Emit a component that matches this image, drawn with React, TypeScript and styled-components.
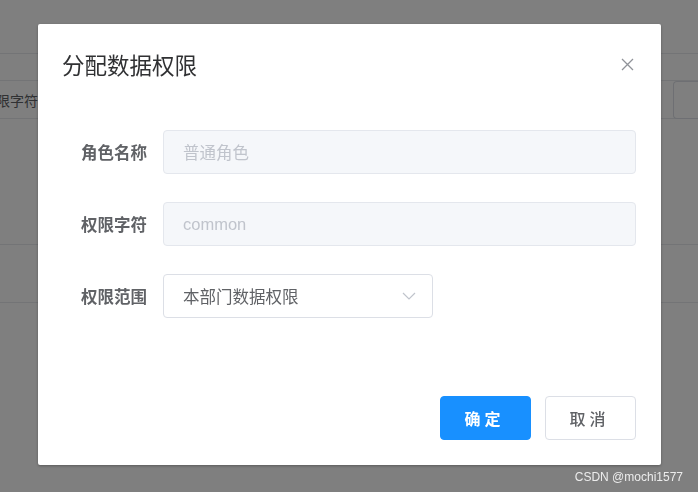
import React from 'react';
import styled, { createGlobalStyle } from 'styled-components';

const GlobalStyle = createGlobalStyle`
  html, body {
    margin: 0;
    padding: 0;
    width: 698px;
    height: 492px;
    overflow: hidden;
    background: #ffffff;
    font-family: "Noto Sans CJK SC", "Liberation Sans", sans-serif;
  }
`;

const Page = styled.div`
  width: 698px;
  height: 492px;
  display: flex;
  flex-direction: column;
  background: #ffffff;
`;

const PageLine = styled.div<{ $h: number }>`
  height: ${(p) => p.$h}px;
  border-bottom: 1px solid #e6e8ec;
  box-sizing: border-box;
  display: flex;
  align-items: center;
  justify-content: space-between;
`;

const GhostText = styled.span`
  font-size: 14px;
  color: #606266;
  margin-left: -18px;
`;

const GhostBox = styled.span`
  width: 26px;
  height: 36px;
  border: 1px solid #dcdfe6;
  border-right: none;
  border-radius: 4px 0 0 4px;
  margin-right: -2px;
`;

const Mask = styled.div`
  position: fixed;
  inset: 0;
  background: rgba(0, 0, 0, 0.5);
`;

const Dialog = styled.div`
  position: fixed;
  left: 38px;
  top: 24px;
  width: 623px;
  height: 441px;
  background: #ffffff;
  border-radius: 2px;
  box-shadow: 0 1px 3px rgba(0, 0, 0, 0.3);
  display: flex;
  flex-direction: column;
  box-sizing: border-box;
`;

const Header = styled.div`
  display: flex;
  align-items: center;
  justify-content: space-between;
  padding: 24px 26px 0 24px;
  height: 56px;
  box-sizing: border-box;
`;

const Title = styled.h2`
  margin: 0;
  font-size: 22.5px;
  font-weight: 400;
  color: #303133;
  line-height: 30px;
`;

const CloseButton = styled.button`
  border: none;
  background: none;
  padding: 0;
  width: 16px;
  height: 16px;
  display: flex;
  align-items: center;
  justify-content: center;
  cursor: pointer;
`;

const Body = styled.div`
  padding: 50px 25px 0 24px;
  display: flex;
  flex-direction: column;
  gap: 28px;
  flex: 1;
`;

const Row = styled.div`
  display: flex;
  align-items: center;
`;

const Label = styled.label`
  flex: 0 0 101px;
  padding-right: 16px;
  box-sizing: border-box;
  text-align: right;
  font-size: 16.5px;
  font-weight: 700;
  color: #606266;
`;

const Field = styled.div<{ $disabled?: boolean; $width?: number }>`
  flex: 0 0 ${(p) => (p.$width ? `${p.$width}px` : '473px')};
  height: 44px;
  box-sizing: border-box;
  border: 1px solid ${(p) => (p.$disabled ? '#e4e7ed' : '#dcdfe6')};
  background: ${(p) => (p.$disabled ? '#f5f7fa' : '#ffffff')};
  border-radius: 4px;
  display: flex;
  align-items: center;
  justify-content: space-between;
  padding: 0 16px 0 19px;
  font-size: 16.5px;
  color: ${(p) => (p.$disabled ? '#c0c4cc' : '#606266')};
`;

const LatinValue = styled.span`
  font-family: "Liberation Sans", "Noto Sans CJK SC", sans-serif;
  font-size: 16.5px;
`;

const Footer = styled.div`
  display: flex;
  justify-content: flex-end;
  gap: 14px;
  padding: 0 25px 25px 0;
`;

const Button = styled.button<{ $primary?: boolean }>`
  width: 91px;
  height: 44px;
  box-sizing: border-box;
  border-radius: 4px;
  border: 1px solid ${(p) => (p.$primary ? '#1890ff' : '#dcdfe6')};
  background: ${(p) => (p.$primary ? '#1890ff' : '#ffffff')};
  color: ${(p) => (p.$primary ? '#ffffff' : '#606266')};
  font-family: "Noto Sans CJK SC", sans-serif;
  font-size: 16px;
  font-weight: ${(p) => (p.$primary ? 700 : 500)};
  letter-spacing: 4px;
  padding-left: 4px;
  cursor: pointer;
`;

const Watermark = styled.div`
  position: fixed;
  right: 15px;
  bottom: 8px;
  font-family: "Liberation Sans", sans-serif;
  font-size: 12px;
  color: rgba(255, 255, 255, 0.85);
`;

export default function App() {
  return (
    <>
      <GlobalStyle />
      <Page>
        <PageLine $h={54} />
        <PageLine $h={27} />
        <PageLine $h={38}>
          <GhostText>权限字符</GhostText>
          <GhostBox />
        </PageLine>
        <PageLine $h={126} />
        <PageLine $h={58} />
      </Page>
      <Mask />
      <Dialog>
        <Header>
          <Title>分配数据权限</Title>
          <CloseButton aria-label="close">
            <svg width="13" height="13" viewBox="0 0 13 13">
              <path d="M1 1L12 12M12 1L1 12" stroke="#909399" strokeWidth="1.3" fill="none" />
            </svg>
          </CloseButton>
        </Header>
        <Body>
          <Row>
            <Label>角色名称</Label>
            <Field $disabled>普通角色</Field>
          </Row>
          <Row>
            <Label>权限字符</Label>
            <Field $disabled>
              <LatinValue>common</LatinValue>
            </Field>
          </Row>
          <Row>
            <Label>权限范围</Label>
            <Field $width={270}>
              本部门数据权限
              <svg width="14" height="8" viewBox="0 0 14 8">
                <path d="M1 1L7 7L13 1" stroke="#c0c4cc" strokeWidth="1.2" fill="none" />
              </svg>
            </Field>
          </Row>
        </Body>
        <Footer>
          <Button $primary>确定</Button>
          <Button>取消</Button>
        </Footer>
      </Dialog>
      <Watermark>CSDN @mochi1577</Watermark>
    </>
  );
}
